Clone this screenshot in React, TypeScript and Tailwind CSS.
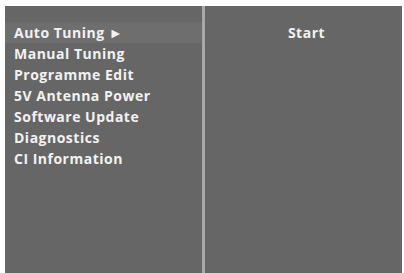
/* 설치 메뉴 화면 — 좌측 항목 목록 + 우측 상세 패널 */

const items = [
  'Auto Tuning ►',
  'Manual Tuning',
  'Programme Edit',
  '5V Antenna Power',
  'Software Update',
  'Diagnostics',
  'CI Information',
]

export default function App() {
  return (
    <div className="h-[273px] w-[404px] overflow-hidden bg-white pt-[6px] pl-[5px] pr-[2px] font-['Open_Sans',sans-serif]">
      <div className="flex h-full bg-[#666666]">
        {/* 좌측 메뉴 */}
        <div className="w-[197px] pt-[16px]">
          {items.map((item, i) => (
            <div
              key={item}
              className={
                'flex h-[21px] items-center pl-[9px] text-[14px] font-bold tracking-[0.5px] text-[#f2f2f2] ' +
                (i === 0 ? 'bg-[#6e6e6e]' : '')
              }
            >
              {item}
            </div>
          ))}
        </div>

        {/* 구분선 */}
        <div className="w-[3px] bg-[#a8a8a8]" />

        {/* 우측 패널 */}
        <div className="flex-1 pt-[16px]">
          <div className="flex h-[21px] items-center justify-center pl-[6px] text-[14px] font-bold tracking-[0.5px] text-[#f2f2f2]">
            Start
          </div>
        </div>
      </div>
    </div>
  )
}
